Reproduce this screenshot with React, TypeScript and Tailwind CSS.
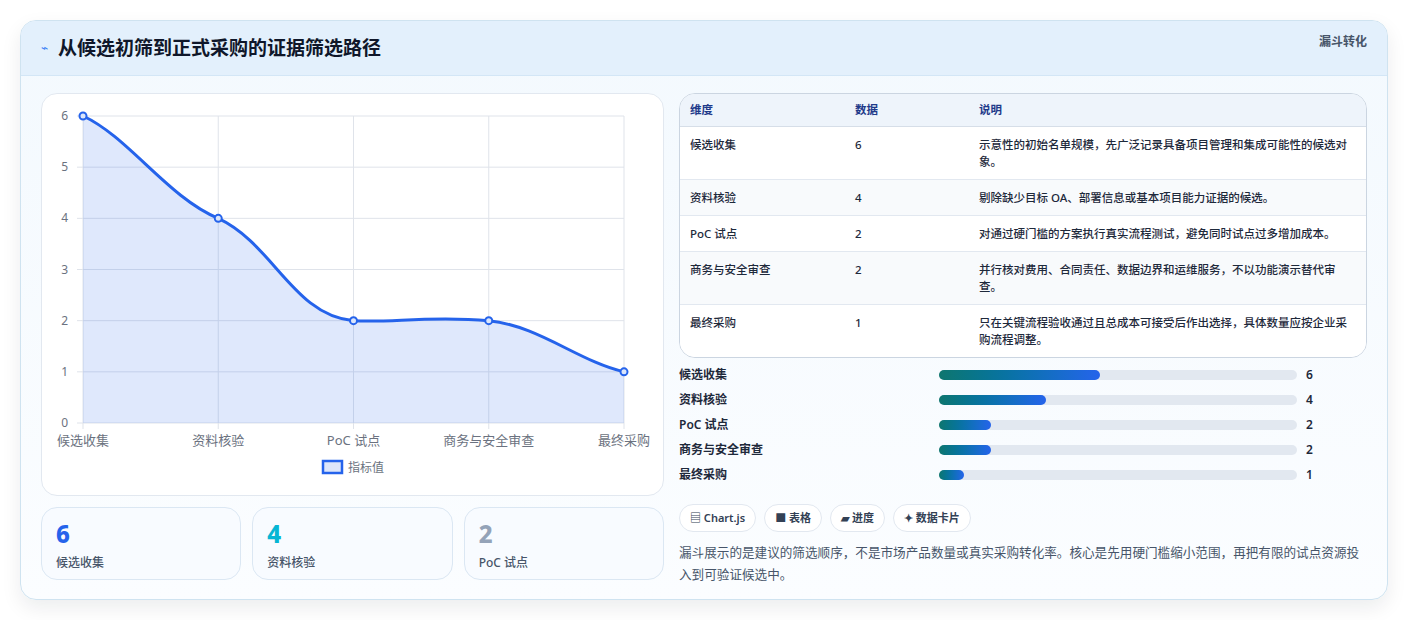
import React from "react";

const F = { fontFamily: '"Noto Sans", "Noto Sans CJK SC", sans-serif' };
const rows = [
  ["候选收集", "6", "示意性的初始名单规模，先广泛记录具备项目管理和集成可能性的候选对象。"],
  ["资料核验", "4", "剔除缺少目标 OA、部署信息或基本项目能力证据的候选。"],
  ["PoC 试点", "2", "对通过硬门槛的方案执行真实流程测试，避免同时试点过多增加成本。"],
  ["商务与安全审查", "2", "并行核对费用、合同责任、数据边界和运维服务，不以功能演示替代审查。"],
  ["最终采购", "1", "只在关键流程验收通过且总成本可接受后作出选择，具体数量应按企业采购流程调整。"],
];

function Chart() {
  const L = 41, R = 582, T = 22, B = 329;
  const xs = [0, 1, 2, 3, 4].map((i) => L + (i * (R - L)) / 4);
  const y = (v: number) => B - (v * (B - T)) / 6;
  const vals = [6, 4, 2, 2, 1];
  const p = `M${xs[0]},${y(6)} C${xs[0] + 45},${y(5.6)} ${xs[1] - 50},${y(4.4)} ${xs[1]},${y(4)} C${xs[1] + 55},${y(3.5)} ${xs[2] - 60},${y(2.1)} ${xs[2]},${y(2)} C${xs[2] + 35},${y(1.95)} ${xs[3] - 60},${y(2.1)} ${xs[3]},${y(2)} C${xs[3] + 50},${y(1.9)} ${xs[4] - 45},${y(1.2)} ${xs[4]},${y(1)}`;
  const lbl = ["候选收集", "资料核验", "PoC 试点", "商务与安全审查", "最终采购"];
  return (
    <svg width="623" height="400" style={F}>
      {[0, 1, 2, 3, 4, 5, 6].map((v) => (
        <g key={v}>
          <line x1={L - 6} x2={R} y1={y(v)} y2={y(v)} stroke="#dfe3ea" />
          <text x={L - 15} y={y(v) + 4} fontSize="12" fill="#6b7280" textAnchor="end">{v}</text>
        </g>
      ))}
      {xs.map((x, i) => (
        <g key={i}>
          <line x1={x} x2={x} y1={T} y2={B + 6} stroke="#dfe3ea" />
          <text x={i === 0 ? x - 26 : i === 4 ? x - 26 : x} y={B + 22} fontSize="13" fill="#6b7280" textAnchor={i === 0 ? "start" : i === 4 ? "start" : "middle"}>{lbl[i]}</text>
        </g>
      ))}
      <path d={`${p} L${R},${B} L${L},${B} Z`} fill="rgba(37,99,235,0.15)" />
      <path d={p} fill="none" stroke="#2563eb" strokeWidth="3" />
      {vals.map((v, i) => (
        <circle key={i} cx={xs[i]} cy={y(v)} r="3.5" fill="#dbe6fb" stroke="#2563eb" strokeWidth="2" />
      ))}
      <rect x="281" y="367" width="19" height="12" fill="#dde6fa" stroke="#2563eb" strokeWidth="2.5" />
      <text x="306" y="378" fontSize="12" fill="#6b7280">指标值</text>
    </svg>
  );
}

export default function App() {
  const bars = [["候选收集", 6, 45], ["资料核验", 4, 30], ["PoC 试点", 2, 14.5], ["商务与安全审查", 2, 14.5], ["最终采购", 1, 7]] as const;
  return (
    <div className="w-[1408px] h-[620px] bg-white pt-5 px-5" style={F}>
      <div className="rounded-2xl border border-[#cfe3f0] overflow-hidden bg-gradient-to-b from-[#f3f9fe] to-[#fbfdff] shadow-[0_8px_20px_rgba(15,23,42,0.08)] h-[580px]">
        <div className="h-[55px] bg-[#e3f0fc] border-b border-[#d3e6f6] flex items-center justify-between px-5">
          <div className="flex items-center gap-2.5">
            <span className="text-[#3b82f6] text-[12px]">⌁</span>
            <span className="text-[19px] font-bold text-[#0f172a]">从候选初筛到正式采购的证据筛选路径</span>
          </div>
          <span className="text-[12px] font-semibold text-[#475569] self-start mt-3">漏斗转化</span>
        </div>
        <div className="flex gap-[15px] px-5 pt-[17px]">
          <div className="w-[623px] flex flex-col gap-[11px]">
            <div className="h-[403px] rounded-2xl border border-[#e2e8f0] bg-white"><Chart /></div>
            <div className="grid grid-cols-3 gap-[11px]">
              {[["6", "text-[#2563eb]", "候选收集"], ["4", "text-[#06b6d4]", "资料核验"], ["2", "text-[#94a3b8]", "PoC 试点"]].map(([n, c, t]) => (
                <div key={t} className="h-[73px] rounded-2xl border border-[#dbe7f3] bg-[#f8fbff] px-3.5 pt-3">
                  <div className={`text-[24px] font-extrabold leading-7 ${c}`}>{n}</div>
                  <div className="text-[12px] text-[#475569] mt-1.5 font-medium">{t}</div>
                </div>
              ))}
            </div>
          </div>
          <div className="flex-1">
            <div className="rounded-2xl border border-[#cbd5e1] overflow-hidden bg-white text-[11.5px] text-[#1e293b]">
              <div className="flex h-[33px] items-center bg-[#eef4fb] border-b border-[#d6dee8] font-semibold text-[#1e3a8a]">
                <div className="w-[175px] pl-2.5">维度</div><div className="w-[124px]">数据</div><div>说明</div>
              </div>
              {rows.map((r, i) => (
                <div key={i} className={`flex py-[9px] border-b last:border-b-0 border-[#e2e8f0] font-medium ${i % 2 ? "bg-[#f8fafc]" : "bg-white"}`}>
                  <div className="w-[175px] pl-2.5 leading-[17px]">{r[0]}</div>
                  <div className="w-[124px] leading-[17px]">{r[1]}</div>
                  <div className="flex-1 pr-2 leading-[17px]">{r[2]}</div>
                </div>
              ))}
            </div>
            <div className="mt-[8px] flex flex-col gap-[8px]">
              {bars.map(([l, v, w]) => (
                <div key={l} className="flex items-center h-[17px] text-[12px] font-semibold text-[#1e293b]">
                  <div className="w-[260px]">{l}</div>
                  <div className="w-[358px] h-[10px] rounded-full bg-[#e2e8f0]">
                    <div className="h-full rounded-full bg-gradient-to-r from-[#0f766e] to-[#2563eb]" style={{ width: `${w}%` }} />
                  </div>
                  <div className="ml-[9px]">{v}</div>
                </div>
              ))}
            </div>
            <div className="flex gap-2 mt-[21px] text-[11px] font-semibold text-[#334155]">
              {["▤ Chart.js", "■ 表格", "▰ 进度", "✦ 数据卡片"].map((c) => (
                <span key={c} className="h-[28px] px-2.5 flex items-center rounded-full border border-[#e2e8f0] bg-white">{c}</span>
              ))}
            </div>
            <p className="mt-[10px] text-[12.6px] leading-[22px] text-[#475569]">漏斗展示的是建议的筛选顺序，不是市场产品数量或真实采购转化率。核心是先用硬门槛缩小范围，再把有限的试点资源投入到可验证候选中。</p>
          </div>
        </div>
      </div>
    </div>
  );
}
